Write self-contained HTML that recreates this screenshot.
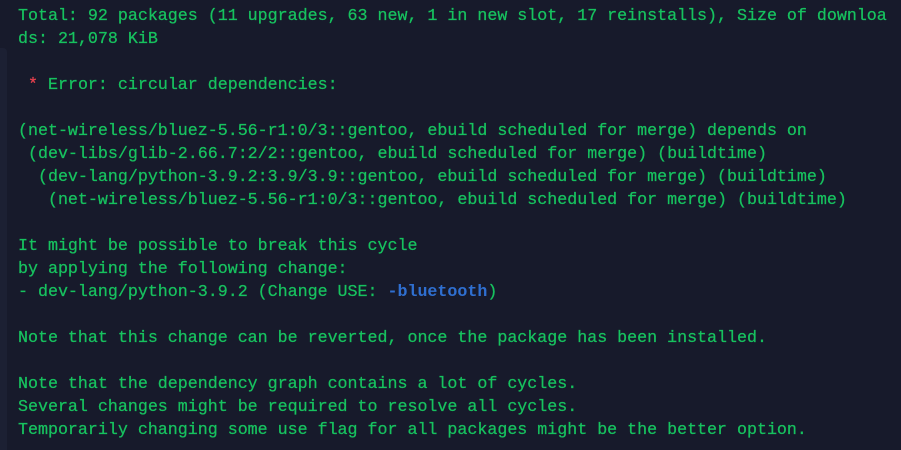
<!DOCTYPE html>
<html><head><meta charset="utf-8"><style>
html,body{margin:0;padding:0;width:901px;height:450px;overflow:hidden;background:#171a2b;}
.strip{position:absolute;left:0;top:48px;width:7px;height:402px;background:#1c2033;border-radius:0 4px 0 0;}
pre{position:absolute;left:18px;top:4px;margin:0;font-family:"Liberation Mono",monospace;font-size:16.65px;line-height:23px;color:#17c25f;white-space:pre;-webkit-text-stroke:0.25px #17c25f;}
.r{color:#e8414e;-webkit-text-stroke:0.25px #e8414e}.b{color:#2f6fd0;font-weight:bold;-webkit-text-stroke:0}
</style></head><body><div class="strip"></div><pre>Total: 92 packages (11 upgrades, 63 new, 1 in new slot, 17 reinstalls), Size of downloa
ds: 21,078 KiB

 <span class="r">*</span> Error: circular dependencies:

(net-wireless/bluez-5.56-r1:0/3::gentoo, ebuild scheduled for merge) depends on
 (dev-libs/glib-2.66.7:2/2::gentoo, ebuild scheduled for merge) (buildtime)
  (dev-lang/python-3.9.2:3.9/3.9::gentoo, ebuild scheduled for merge) (buildtime)
   (net-wireless/bluez-5.56-r1:0/3::gentoo, ebuild scheduled for merge) (buildtime)

It might be possible to break this cycle
by applying the following change:
- dev-lang/python-3.9.2 (Change USE: <span class="b">-bluetooth</span>)

Note that this change can be reverted, once the package has been installed.

Note that the dependency graph contains a lot of cycles.
Several changes might be required to resolve all cycles.
Temporarily changing some use flag for all packages might be the better option.</pre></body></html>
